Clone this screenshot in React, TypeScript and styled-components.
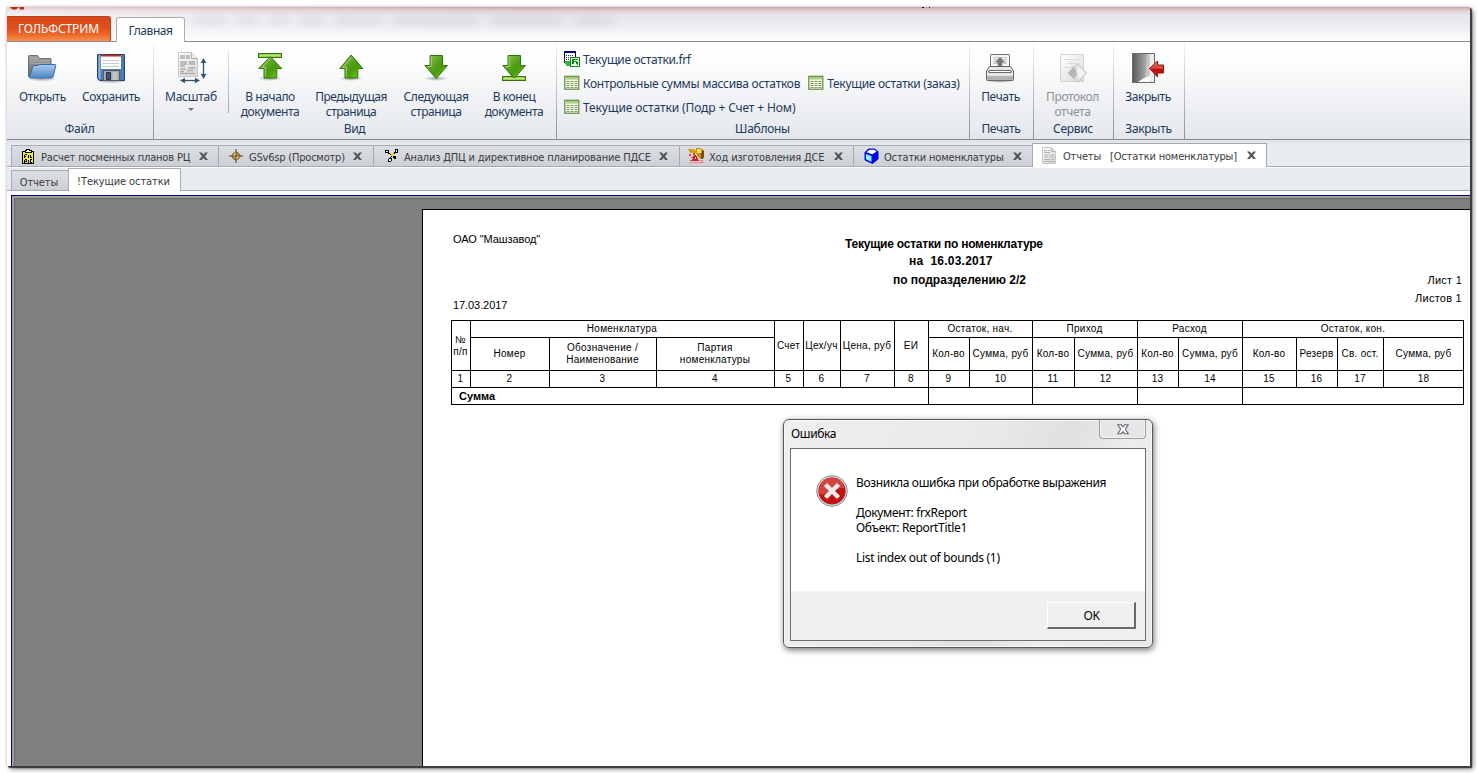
import React from 'react';
import styled, { createGlobalStyle, css } from 'styled-components';

const UI = '"Noto Sans", "Open Sans", sans-serif';
const TAHOMA = '"DejaVu Sans Condensed", "DejaVu Sans", sans-serif';
const ARIAL = '"Liberation Sans", Arial, sans-serif';

const GlobalStyle = createGlobalStyle`
  *, *::before, *::after { box-sizing: border-box; }
  html, body { margin: 0; background: #fff; }
  body { overflow: hidden; font: 12px/15px ${UI}; color: #1e395b; }
  svg { display: block; flex: none; }
`;

/* ---------- shell ---------- */

const Screen = styled.div`
  width: 1477px;
  height: 773px;
  padding: 7px;
  overflow: hidden;
`;

const Window = styled.div`
  width: 1463px;
  height: 759px;
  display: flex;
  flex-direction: column;
  background: #fff;
  box-shadow: 1px 1px 0 #3c3c3c, 2px 2px 1px rgba(0, 0, 0, 0.6), 3px 3px 5px rgba(0, 0, 0, 0.5), 0 0 3px rgba(0, 0, 0, 0.22);
`;

const TitleBar = styled.header`
  position: relative;
  height: 35px;
  flex: none;
  display: flex;
  align-items: flex-end;
  background: linear-gradient(90deg, rgba(255,255,255,.45), rgba(255,255,255,0) 35%),
    linear-gradient(#c99c9e 0, #dac0c2 2px, #e3d8db 5px, #e6e7eb 9px, #eaecf0 18px, #f6f7f9 28px, #fdfdfe 34px);
  border-bottom: 1px solid #868b91;
`;

const AppButton = styled.button`
  width: 104px;
  height: 25px;
  padding: 0 0 1px;
  border: 1px solid #b9421b;
  border-left: 0;
  border-bottom: 0;
  border-radius: 0 3px 0 0;
  background: linear-gradient(#d8481a 0, #dd4f1c 45%, #ec6a2c 75%, #f98f4e 100%);
  color: #fff;
  font: 12px/15px ${UI};
  letter-spacing: -0.1px;
`;

const RibbonTab = styled.div`
  width: 69px;
  height: 25px;
  margin: 0 0 -1px 5px;
  padding-top: 5px;
  text-align: center;
  background: #fff;
  border: 1px solid #a9aeb5;
  border-bottom: 0;
  border-radius: 3px 3px 0 0;
  letter-spacing: -0.45px;
  position: relative;
`;

const GlassMenu = styled.div`
  position: absolute;
  left: 188px;
  top: 9px;
  display: flex;
  gap: 12px;
  filter: blur(4px);
`;

const Smear = styled.i<{ $w: number }>`
  width: ${(p) => p.$w}px;
  height: 9px;
  background: rgba(110, 112, 125, 0.11);
`;

const Fragment = styled.div<{ $x: number }>`
  position: absolute;
  left: ${(p) => p.$x}px;
  top: 0;
`;

/* ---------- ribbon ---------- */

const Ribbon = styled.div`
  height: 98px;
  flex: none;
  display: flex;
  background: linear-gradient(#fff, #fbfcfd 25%, #eef0f3 65%, #e4e8ed);
  border-bottom: 1px solid #868b91;
`;

const Group = styled.section<{ $w: number }>`
  width: ${(p) => p.$w}px;
  display: flex;
  flex-direction: column;
  border-right: 1px solid;
  border-image: linear-gradient(#f4f5f6, #8b9097) 1;
`;

const GroupBody = styled.div`
  height: 79px;
  display: flex;
`;

const GroupLabel = styled.div`
  padding-right: 1px;
  text-align: center;
  letter-spacing: -0.3px;
`;

const BigButton = styled.div<{ $w: number; $disabled?: boolean; $ls?: number }>`
  width: ${(p) => p.$w}px;
  padding-top: 10px;
  display: flex;
  flex-direction: column;
  align-items: center;
  text-align: center;
  white-space: pre;
  letter-spacing: ${(p) => p.$ls ?? -0.4}px;
  color: ${(p) => (p.$disabled ? '#8d9197' : '#1e395b')};
  svg { margin-bottom: 5px; }
`;

const InnerRule = styled.div`
  width: 1px;
  height: 61px;
  margin-top: 10px;
  background: linear-gradient(#dfe3ea, #9fa9bd);
`;

const DropArrow = styled.i`
  margin-top: 4px;
  border: 3px solid transparent;
  border-top-color: #6c7178;
  border-bottom: 0;
`;

const Templates = styled.div`
  height: 79px;
  padding: 5px 0 0 7px;
  display: flex;
  flex-direction: column;
`;

const TemplateRow = styled.div`
  height: 24px;
  display: flex;
  gap: 8px;
`;

const Template = styled.div<{ $ls: number }>`
  display: flex;
  align-items: center;
  gap: 3px;
  white-space: nowrap;
  letter-spacing: ${(p) => p.$ls}px;
`;

/* ---------- tab strips ---------- */

const WorkTabs = styled.nav`
  height: 27px;
  flex: none;
  display: flex;
  align-items: flex-end;
  padding: 0 0 0 4px;
  background: linear-gradient(#dfe3e8, #e8ebf0 5px);
  border-bottom: 1px solid #a5abb5;
  font-family: ${TAHOMA};
  font-size: 11px;
  color: #3b3b3b;
`;

const WorkTab = styled.div<{ $w: number; $pad: number; $active?: boolean }>`
  width: ${(p) => p.$w}px;
  height: 21px;
  padding-left: ${(p) => p.$pad}px;
  display: flex;
  align-items: center;
  border: 1px solid #a5abb5;
  border-bottom: 0;
  border-right-width: 0;
  background: linear-gradient(#dcdfe4, #ccd0d6);
  ${(p) =>
    p.$active &&
    css`
      height: 24px;
      margin-bottom: -1px;
      padding-bottom: 1px;
      border-right-width: 1px;
      background: #fff;
    `}
`;

const WorkLabel = styled.span<{ $gap: number; $w: number; $ls?: number }>`
  width: ${(p) => p.$w}px;
  margin-left: ${(p) => p.$gap}px;
  padding-top: 2px;
  white-space: pre;
  letter-spacing: ${(p) => p.$ls ?? -0.17}px;
`;

const DocTabs = styled.nav`
  height: 24px;
  flex: none;
  display: flex;
  align-items: flex-end;
  padding-left: 4px;
  background: #e8ebf0;
  border-top: 1px solid #fff;
  border-bottom: 1px solid #a5abb5;
  font-family: ${TAHOMA};
  font-size: 11px;
  color: #3b3b3b;
`;

const DocTab = styled.div<{ $w: number; $active?: boolean }>`
  width: ${(p) => p.$w}px;
  height: 20px;
  padding: 4px 2px 0 0;
  text-align: center;
  letter-spacing: -0.1px;
  border: 1px solid #a5abb5;
  border-bottom: 0;
  border-right: 0;
  background: linear-gradient(#dcdfe4, #ccd0d6);
  ${(p) =>
    p.$active &&
    css`
      height: 23px;
      padding-top: 5px;
      margin-bottom: -1px;
      border-right: 1px solid #a5abb5;
      background: #fff;
    `}
`;

/* ---------- report ---------- */

const Viewer = styled.main`
  flex: 1;
  min-height: 0;
  margin: 4px 0 0 4px;
  border: 1px solid #000080;
  border-right: 0;
  border-bottom: 0;
  display: flex;
`;

const ViewerInner = styled.div`
  flex: 1;
  border: solid #a0a0a0;
  border-width: 2px 0 0 2px;
  display: flex;
`;

const Canvas = styled.div`
  flex: 1;
  border: solid #696969;
  border-width: 1px 0 0 1px;
  background: #808080;
  padding: 10px 0 0 407px;
  display: flex;
`;

const Page = styled.article`
  flex: 1;
  border: solid #000;
  border-width: 1px 0 0 1px;
  background: #fff;
  padding: 21px 0 0 28px;
  font-family: ${ARIAL};
  color: #000;
`;

const ReportHead = styled.div`
  width: 1013px;
  height: 89px;
  display: flex;
  justify-content: space-between;
  font-size: 11px;
`;

const HeadLeft = styled.div`
  width: 200px;
  padding: 1px 0 7px 2px;
  display: flex;
  flex-direction: column;
  justify-content: space-between;
  letter-spacing: -0.08px;
`;

const HeadCenter = styled.div`
  width: 420px;
  padding: 6px 0 0 0;
  font-weight: bold;
  font-size: 12px;
  white-space: pre;
`;

const TitleLine = styled.div<{ $indent: number; $h: number; $ls: number }>`
  height: ${(p) => p.$h}px;
  padding-left: ${(p) => p.$indent}px;
  letter-spacing: ${(p) => p.$ls}px;
`;

const HeadRight = styled.div`
  width: 199px;
  padding: 40px 2px 0 0;
  text-align: right;
  line-height: 18px;
  letter-spacing: 0.25px;
`;

const Table = styled.div`
  width: 1013px;
  display: grid;
  grid-template-columns: 19px 79px 107px 118px 29px 37px 54px 34px 41px 63px 42px 63px 41px 64px 54px 41px 46px 81px;
  grid-template-rows: 17px 33px 17px 18px;
  border-right: 1px solid #000;
  font-size: 10px;
  line-height: 12px;
`;

const Cell = styled.div<{ $col: number; $row: number; $cols?: number; $rows?: number; $total?: boolean }>`
  grid-column: ${(p) => p.$col} / span ${(p) => p.$cols ?? 1};
  grid-row: ${(p) => p.$row} / span ${(p) => p.$rows ?? 1};
  padding-right: 1px;
  display: flex;
  align-items: center;
  justify-content: center;
  text-align: center;
  white-space: pre;
  letter-spacing: 0.27px;
  border: solid #000;
  border-width: 1px 0 0 1px;
  ${(p) =>
    p.$total &&
    css`
      justify-content: flex-start;
      padding-left: 7px;
      border-bottom-width: 1px;
      font-weight: bold;
      font-size: 11px;
      letter-spacing: 0;
    `}
`;

/* ---------- error dialog ---------- */

const Dialog = styled.div`
  position: absolute;
  left: 783px;
  top: 419px;
  width: 370px;
  height: 229px;
  padding: 0 6px 6px;
  display: flex;
  flex-direction: column;
  border: 1px solid #55585c;
  border-radius: 6px;
  background: linear-gradient(115deg, #efefef 0, #e9e9e9 45%, #e0e0e0 62%, #ececec 75%, #e8e8e8);
  box-shadow: inset 0 0 0 1px #f8f8f8, 1px 2px 6px rgba(0, 0, 0, 0.55);
  color: #000;
`;

const DialogTitle = styled.div`
  height: 28px;
  flex: none;
  display: flex;
  justify-content: space-between;
  padding: 0 0 0 1px;
  letter-spacing: -0.35px;
  span { padding-top: 6px; }
`;

const DialogClose = styled.div`
  width: 47px;
  height: 19px;
  display: flex;
  align-items: center;
  justify-content: center;
  border: 1px solid #9b9da1;
  border-top: 0;
  border-radius: 0 0 4px 4px;
  background: #e6e6e7;
  box-shadow: inset 0 0 0 1px #f3f3f3;
`;

const DialogClient = styled.div`
  flex: 1;
  display: flex;
  flex-direction: column;
  border: 1px solid #6b6e72;
  background: #fff;
`;

const Message = styled.div`
  height: 142px;
  padding: 26px 0 0 25px;
  display: flex;
  gap: 8px;
`;

const MessageText = styled.div`
  white-space: pre;
  letter-spacing: -0.33px;
`;

const DialogFooter = styled.div`
  flex: 1;
  padding: 11px 9px 0 0;
  display: flex;
  justify-content: flex-end;
  background: #f0f0f0;
`;

const OkButton = styled.button`
  width: 89px;
  height: 27px;
  padding: 0 0 0 1px;
  border: solid;
  border-width: 1px 2px 2px 1px;
  border-color: #fff #696969 #696969 #fff;
  background: #f0f0f0;
  font: 12px/15px ${UI};
  letter-spacing: -0.3px;
  color: #000;
`;

/* ---------- icons ---------- */

const Defs = () => (
  <svg width="0" height="0" aria-hidden>
    <defs>
      <linearGradient id="gr" x1="0" y1="0" x2="1" y2="1">
        <stop offset="0" stopColor="#9bc868" /><stop offset=".45" stopColor="#56a01b" /><stop offset=".6" stopColor="#4a9a0a" /><stop offset="1" stopColor="#74d81a" />
      </linearGradient>
      <linearGradient id="bl" x1="0" y1="0" x2="0" y2="1">
        <stop offset="0" stopColor="#a9cbef" /><stop offset="1" stopColor="#4f86c6" />
      </linearGradient>
      <linearGradient id="gy" x1="0" y1="0" x2="0" y2="1">
        <stop offset="0" stopColor="#a2a2a2" /><stop offset="1" stopColor="#666" />
      </linearGradient>
      <linearGradient id="pap" x1="0" y1="0" x2="1" y2="1">
        <stop offset="0" stopColor="#fff" /><stop offset="1" stopColor="#d5d5d5" />
      </linearGradient>
      <linearGradient id="door" x1="0" y1="0" x2="1" y2="0">
        <stop offset="0" stopColor="#5c5c5c" /><stop offset="1" stopColor="#b9b9b9" />
      </linearGradient>
      <linearGradient id="rd" x1="0" y1="0" x2="0" y2="1">
        <stop offset="0" stopColor="#e2807c" /><stop offset=".48" stopColor="#cf3a36" /><stop offset=".52" stopColor="#b80f0f" /><stop offset="1" stopColor="#d81a14" />
      </linearGradient>
      <radialGradient id="sh"><stop offset="0" stopColor="#000" stopOpacity=".35" /><stop offset="1" stopColor="#000" stopOpacity="0" /></radialGradient>
    </defs>
  </svg>
);

const OpenIcon = () => (
  <svg width="32" height="32" viewBox="1 0 32 32">
    <ellipse cx="16" cy="27" rx="15" ry="2.5" fill="url(#sh)" />
    <path d="M2.500 25V4.500q0-1 1-1h8l2 3h10.500q1 0 1 1V16H8z" fill="url(#gy)" stroke="#6e6e6e" />
    <path d="M4 6.500h8M4 9h20M4 11.500h20" stroke="#b5b5b5" strokeWidth=".7" />
    <path d="M6.500 15q.3-1.500 1.500-1.500h4l1.500-1h15.500q1 0 .8 1L27 25q-.3 1-1.500 1H4.500q-1.500 0-1-1.500 2-4 3-9.500z" fill="url(#bl)" stroke="#3c6ba5" />
  </svg>
);

const SaveIcon = () => (
  <svg width="32" height="32" viewBox="0 0 32 32">
    <ellipse cx="16" cy="29" rx="16" ry="2.500" fill="url(#sh)" />
    <path d="M2.500 2.500h27v26h-25l-2-2z" fill="#4c79b7" stroke="#26436f" />
    <path d="M3.500 3.500h2v23h-2z" fill="#8fb3de" />
    <path d="M6 3h20v14H6z" fill="#fbfbfb" /><path d="M6 3h20v1.500H6z" fill="#cf2414" />
    <path d="M8 8.500h16M8 11.500h16M8 14.500h16" stroke="#c9ccd1" />
    <path d="M8.500 18.500h16v10h-16z" fill="#a7a9ad" stroke="#595b60" />
    <path d="M11.500 20.500h4v7h-4z" fill="#35538a" stroke="#333" />
    <path d="M17.500 20h5v8h-5z" fill="#c4c4c4" />
  </svg>
);

const ScaleIcon = () => (
  <svg width="32" height="32" viewBox="0 0 32 32">
    <path d="M3.500.500h13l6 6v18h-19z" fill="url(#pap)" stroke="#c6c6c6" />
    <path d="M16.500.500v6h6" fill="#eee" stroke="#b0b0b0" />
    <path d="M5 4h5m1 0h4M5 6h5m1 0h4M5 10h7m1.500 0H20M5 12h7m1.500 0H20M5 14h5M5 17h6m2-1h7M5 19.500h4m3-1h6M5 21.500h15" stroke="#acacac" strokeWidth="1.300" />
    <path d="M28.500 10v13" stroke="#33536f" strokeWidth="1.300" /><path d="M28.500 6l2.800 5h-5.600zM28.500 27l2.800-5h-5.600z" fill="#33536f" />
    <path d="M8 28.500h13" stroke="#33536f" strokeWidth="1.300" /><path d="M5 28.500l5-2.800v5.600zM25 28.500l-5-2.800v5.600z" fill="#33536f" />
  </svg>
);

const ArrowIcon = ({ down, bar }: { down?: boolean; bar?: boolean }) => (
  <svg width="32" height="32" viewBox="0 0 32 32">
    <ellipse cx="16" cy="26.500" rx="12" ry="2.500" fill="url(#sh)" />
    {bar && <rect x="4.500" y={down ? 24.500 : 1.500} width="23" height="4" fill="#9ad057" stroke="#33750b" />}
    <path
      d={down ? 'M10 3.500h12.500v10h5L16.200 26.500 4.800 13.500H10z' : bar ? 'M16.200 4.500 27.800 16.500h-5v9.500H10v-9.500H4.800z' : 'M16.200 3 27.800 16.500h-5v9.500H10v-9.500H4.800z'}
      fill="url(#gr)" stroke="#33750b" strokeLinejoin="round"
    />
    <path
      d={down ? 'M11.200 5v9.500H7.500' : 'M16.200 6 7.800 15.500h3.500V25'}
      fill="none" stroke="#c0e394" strokeOpacity=".7"
    />
    {bar && <path d={down ? 'M6 26.500h20' : 'M6 3.500h20'} stroke="#b7e67c" />}
  </svg>
);

const PrintIcon = () => (
  <svg width="32" height="32" viewBox="1 0 32 32">
    <ellipse cx="16" cy="29" rx="15" ry="2" fill="url(#sh)" />
    <path d="M6.500 14V3q0-.5.500-.5h18q.5 0 .5.500v11" fill="#f6f6f6" stroke="#707070" />
    <path d="M9 5.500h14M9 7.500h14M9 9.500h14M9 11.500h5m5 0h4" stroke="#c4c4c4" />
    <path d="M16 5l5 5.500h-2.800V14h-4.400v-3.500H11z" fill="#777" />
    <path d="M5.500 14.500h21l3 4.500v8.500q0 1-1 1h-25q-1 0-1-1V19z" fill="#e7e7e7" stroke="#6a6a6a" />
    <path d="M5 18.500h22v2H5z" fill="#fff" stroke="#5b5b5b" strokeWidth=".9" />
    <path d="M3 24h26v4H3z" fill="#9b9b9b" opacity=".7" />
  </svg>
);

const ProtocolIcon = () => (
  <svg width="32" height="32" viewBox="1 0 32 32">
    <path d="M4.500 2.500h23v27h-23z" fill="url(#pap)" stroke="#cdcdcd" opacity=".85" />
    <path d="M8 7.500h16M11 11.500h10M8 15.500h10" stroke="#dadada" />
    <path d="M21.500 11.500 31 21 21.500 30 12 21z" fill="#dedede" stroke="#c8c8c8" />
    <path d="M12 21l6-7 3 8-3 5z" fill="#b7b7b7" /><path d="M22 14l7 7-6 6-2-7z" fill="#f3f3f3" />
  </svg>
);

const ExitIcon = () => (
  <svg width="34" height="32" viewBox="1 0 34 32">
    <path d="M2.500 1.500h22v29h-22z" fill="#ececec" stroke="#6a6a6a" />
    <path d="M3 2h16v24L8 30H3z" fill="url(#door)" /><path d="M17 2.500l3 .5v20l-5 4z" fill="#c9c9c9" opacity=".8" />
    <path d="M14 26l6-2v6H8z" fill="#fafafa" />
    <path d="M19.500 16.500 27.500 9v4h6v8h-6v4z" fill="url(#rd)" stroke="#96100e" strokeLinejoin="round" />
  </svg>
);

const GridIcon = () => (
  <svg width="16" height="16" viewBox="0 0 16 16">
    <rect x=".8" y="1.300" width="14" height="12.900" fill="#f4fae9" stroke="#64893b" strokeWidth="1.200" />
    <rect x="1.400" y="2" width="12.800" height="2.500" fill="#a9cc86" />
    <path d="M2.500 6.500h3m1 0h3m1 0h3M2.500 8.500h3m1 0h3m1 0h3M2.500 10.500h3m1 0h3m1 0h3M2.500 12.500h3m1 0h3m1 0h3" stroke="#7f9a5c" strokeWidth="1" />
  </svg>
);

const FrfIcon = () => (
  <svg width="16" height="16" viewBox="0 0 16 16" shapeRendering="crispEdges">
    <path d="M.5.500h11v11H.5z" fill="#fff" stroke="#111" /><path d="M0 0h12v2H0z" fill="#000080" />
    <path d="M2 4.500h1m1 0h1m1 0h1m1 0h1M2 6.500h1m1 0h1m1 0h1m1 0h1M2 8.500h1m1 0h1m1 0h1" stroke="#222" strokeWidth="1" />
    <path d="M1 10h6v5H2z" fill="#3cb543" />
    <path d="M6.500 6.500h9v9h-9z" fill="#eaffea" stroke="#0a8a12" /><path d="M9 13V8.500h5M9 10.500h3l2 3" stroke="#0a8a12" fill="none" strokeWidth="1.500" />
  </svg>
);

const CloseX = () => (
  <svg width="9" height="9" viewBox="0 0 9 9">
    <path d="M0 .5h2.700l1.800 2 1.800-2H9L6 4.300 9 8H6.300L4.500 6 2.700 8H0l3-3.700z" fill="#55585d" />
  </svg>
);

const ClipboardIcon = () => (
  <svg width="12" height="15" viewBox="0 0 12 15" shapeRendering="crispEdges">
    <path d="M.5 2.500h11v12H.5z" fill="#f3ee2b" stroke="#000" />
    <path d="M3 3h6V1.500H7.500V.5h-3v1H3z" fill="#fff" stroke="#000" />
    <path d="M2.500 5.500V9M2.500 5.500H5M3 7.500h1M6.500 5.500V9M8.500 5.500v3H10M2.500 10.500V14M2.500 10.500h2v1.500H3M6.500 10.500V14M10 10.500H8.500V13H10" stroke="#000" fill="none" />
  </svg>
);

const StarIcon = () => (
  <svg width="14" height="14" viewBox="0 0 14 14">
    <path d="M7 0l1.300 5.700L14 7 8.300 8.300 7 14 5.700 8.300 0 7l5.700-1.300z" fill="#8f6530" stroke="#6d4f28" strokeWidth=".5" />
    <circle cx="7" cy="7" r="3.700" fill="#b58a4e" stroke="#8a6433" />
    <path d="M7 2v5H3.500zM7 7h4L7 11z" fill="#e0c48e" /><path d="M7 3v8M3 7h8" stroke="#5f4320" strokeWidth=".7" />
  </svg>
);

const MoleculeIcon = () => (
  <svg width="14" height="14" viewBox="0 0 14 14" shapeRendering="crispEdges">
    <path d="M3 4l4 2 4-3M7 6l3 3M7 6l-2 4" stroke="#000" strokeWidth="1.200" fill="none" />
    <circle cx="2" cy="2.500" r="1.600" fill="#fff" stroke="#000" /><circle cx="11.500" cy="2" r="1.600" fill="#fff" stroke="#000" />
    <circle cx="5" cy="11" r="1.500" fill="#fff" stroke="#000" /><circle cx="10" cy="8.500" r="1" fill="#fff" stroke="#000" /><path d="M6 4h3v3H6z" fill="#f0d21c" />
  </svg>
);

const HammerIcon = () => (
  <svg width="17" height="16" viewBox="0 0 17 16" shapeRendering="crispEdges">
    <path d="M1 6h2v2H1zM3 9h2v1H3zM5 5h2v2H5zM2 12h3v1H2z" fill="#e03a3a" />
    <path d="M4 13l2-6h2l3 6z" fill="#d02020" /><path d="M7 9h1v2H7z" fill="#fff" />
    <path d="M0 1h5l5 2v3L5 4.500H2z" fill="#d8a010" /><path d="M8 0h4l4 2v8l-4 1-3-3z" fill="#c98f0c" /><path d="M9 1h4v4H9z" fill="#f6df7a" /><path d="M14 3h2v7l-3 1v-3z" fill="#7a4e05" />
    <path d="M12 12h2v1h-2zM1 14.500h15" stroke="#ff8d8d" fill="#ff6666" />
  </svg>
);

const CubeIcon = () => (
  <svg width="15" height="16" viewBox="0 0 15 16">
    <path d="M4.500 1h6L14 3.500v7.500l-5.500 4.500L1 12V4.500z" fill="#0000f0" stroke="#0000f0" strokeWidth="1" strokeLinejoin="round" />
    <path d="M2.500 4.300l3-2.600h4.800l2.400 1.800L8.300 6.300z" fill="#fff" /><path d="M1.900 5.900l5.600 2v6L1.900 11.300z" fill="#7ff4ff" />
  </svg>
);

const SheetIcon = () => (
  <svg width="14" height="17" viewBox="0 0 14 17">
    <path d="M.5.500h9l4 4v12H.5z" fill="url(#pap)" stroke="#c4c4c4" /><path d="M9.500.500v4h4" fill="#ddd" stroke="#b9b9b9" />
    <path d="M2 3.500h3m1 0h2M2 5.500h6M2 8h5m1 0h4M2 10h4m1 0h5M2 12.500h6m1 0h3M2 14.500h10" stroke="#b0b0b0" />
  </svg>
);

const ErrorIcon = () => (
  <svg width="32" height="32" viewBox="0 0 32 32">
    <circle cx="16" cy="16" r="15.300" fill="#d9d9d9" stroke="#8b8d90" />
    <circle cx="16" cy="16" r="13.600" fill="#c01413" />
    <path d="M2.800 18.500A13.400 13.400 0 0 1 29 13Q20 13 14 17t-11.200 1.500z" fill="#dd625e" opacity=".6" />
    <path d="M9.500 9.500l13 13M22.500 9.500l-13 13" stroke="#ececec" strokeWidth="4.400" />
  </svg>
);

const DialogX = () => (
  <svg width="12" height="11" viewBox="0 0 12 11">
    <path d="M.7.700h3.500L6 3 7.800.7h3.500L8.300 5.300l3 4.500H7.800L6 7.500 4.200 9.800H.7l3-4.500z" fill="#fff" stroke="#5e6473" strokeWidth="1.100" strokeLinejoin="round" />
  </svg>
);

/* ---------- data ---------- */

const workTabs = [
  { w: 207, pad: 10, icon: <ClipboardIcon />, gap: 7, text: 'Расчет посменных планов РЦ', tw: 158 },
  { w: 155, pad: 10, icon: <StarIcon />, gap: 6, text: 'GSv6sp (Просмотр)', tw: 104, ls: -0.2 },
  { w: 306, pad: 11, icon: <MoleculeIcon />, gap: 5, text: 'Анализ ДПЦ и директивное планирование ПДСЕ', tw: 255 },
  { w: 174, pad: 8, icon: <HammerIcon />, gap: 4, text: 'Ход изготовления ДСЕ', tw: 125 },
  { w: 179, pad: 10, icon: <CubeIcon />, gap: 5, text: 'Остатки номенклатуры', tw: 129 },
];

const cells: [string, number, number, number, number][] = [
  ['№\nп/п', 1, 1, 1, 2], ['Номенклатура', 2, 1, 3, 1], ['Счет', 5, 1, 1, 2], ['Цех/уч', 6, 1, 1, 2], ['Цена, руб', 7, 1, 1, 2], ['ЕИ', 8, 1, 1, 2],
  ['Остаток, нач.', 9, 1, 2, 1], ['Приход', 11, 1, 2, 1], ['Расход', 13, 1, 2, 1], ['Остаток, кон.', 15, 1, 4, 1],
  ['Номер', 2, 2, 1, 1], ['Обозначение /\nНаименование', 3, 2, 1, 1], ['Партия\nноменклатуры', 4, 2, 1, 1],
  ['Кол-во', 9, 2, 1, 1], ['Сумма, руб', 10, 2, 1, 1], ['Кол-во', 11, 2, 1, 1], ['Сумма, руб', 12, 2, 1, 1], ['Кол-во', 13, 2, 1, 1], ['Сумма, руб', 14, 2, 1, 1],
  ['Кол-во', 15, 2, 1, 1], ['Резерв', 16, 2, 1, 1], ['Св. ост.', 17, 2, 1, 1], ['Сумма, руб', 18, 2, 1, 1],
];

const totals: [string, number, number][] = [['Сумма', 1, 8], ['', 9, 2], ['', 11, 2], ['', 13, 2], ['', 15, 4]];

export default function App() {
  return (
    <Screen>
      <GlobalStyle />
      <Window>
        <TitleBar>
          <Fragment $x={3}>
            <svg width="14" height="4" viewBox="0 0 14 4"><path d="M0 0q1 3 6 2.500L9 0M9.500 0H14v2.500H9.500z" fill="#c5281f" /></svg>
          </Fragment>
          <Fragment $x={915}>
            <svg width="10" height="1" viewBox="0 0 10 1"><path d="M0 0h2v1H0zM7 0h1v1H7z" fill="#111" /></svg>
          </Fragment>
          <GlassMenu>
            <Smear $w={30} /><Smear $w={20} /><Smear $w={20} /><Smear $w={22} /><Smear $w={46} /><Smear $w={84} /><Smear $w={74} /><Smear $w={38} />
          </GlassMenu>
          <AppButton>ГОЛЬФСТРИМ</AppButton>
          <RibbonTab>Главная</RibbonTab>
        </TitleBar>

        <Ribbon>
          <Group $w={147}>
            <GroupBody>
              <BigButton $w={71}><OpenIcon />Открыть</BigButton>
              <BigButton $w={66}><SaveIcon />Сохранить</BigButton>
            </GroupBody>
            <GroupLabel>Файл</GroupLabel>
          </Group>
          <Group $w={403}>
            <GroupBody>
              <BigButton $w={74} $ls={-0.25}><ScaleIcon />Масштаб<DropArrow /></BigButton>
              <InnerRule />
              <BigButton $w={82}><ArrowIcon bar />{'В начало\nдокумента'}</BigButton>
              <BigButton $w={80} $ls={-0.5}><ArrowIcon />{'Предыдущая\nстраница'}</BigButton>
              <BigButton $w={90}><ArrowIcon down />{'Следующая\nстраница'}</BigButton>
              <BigButton $w={66}><ArrowIcon down bar />{'В конец\nдокумента'}</BigButton>
            </GroupBody>
            <GroupLabel>Вид</GroupLabel>
          </Group>
          <Group $w={413}>
            <Templates>
              <TemplateRow><Template $ls={-0.35}><FrfIcon />Текущие остатки.frf</Template></TemplateRow>
              <TemplateRow>
                <Template $ls={-0.28}><GridIcon />Контрольные суммы массива остатков</Template>
                <Template $ls={-0.3}><GridIcon />Текущие остатки (заказ)</Template>
              </TemplateRow>
              <TemplateRow><Template $ls={-0.12}><GridIcon />Текущие остатки (Подр + Счет + Ном)</Template></TemplateRow>
            </Templates>
            <GroupLabel>Шаблоны</GroupLabel>
          </Group>
          <Group $w={64}>
            <GroupBody><BigButton $w={61}><PrintIcon />Печать</BigButton></GroupBody>
            <GroupLabel>Печать</GroupLabel>
          </Group>
          <Group $w={80}>
            <GroupBody><BigButton $w={77} $disabled><ProtocolIcon />{'Протокол\nотчета'}</BigButton></GroupBody>
            <GroupLabel>Сервис</GroupLabel>
          </Group>
          <Group $w={71}>
            <GroupBody><BigButton $w={68}><ExitIcon />Закрыть</BigButton></GroupBody>
            <GroupLabel>Закрыть</GroupLabel>
          </Group>
        </Ribbon>

        <WorkTabs>
          {workTabs.map((t) => (
            <WorkTab key={t.text} $w={t.w} $pad={t.pad}>
              {t.icon}
              <WorkLabel $gap={t.gap} $w={t.tw} $ls={t.ls}>{t.text}</WorkLabel>
              <CloseX />
            </WorkTab>
          ))}
          <WorkTab $w={235} $pad={9} $active>
            <SheetIcon />
            <WorkLabel $gap={7} $w={184} $ls={-0.17}>{'Отчеты   [Остатки номенклатуры]'}</WorkLabel>
            <CloseX />
          </WorkTab>
        </WorkTabs>

        <DocTabs>
          <DocTab $w={57}>Отчеты</DocTab>
          <DocTab $w={113} $active>!Текущие остатки</DocTab>
        </DocTabs>

        <Viewer>
          <ViewerInner>
            <Canvas>
              <Page>
                <ReportHead>
                  <HeadLeft>
                    <div>ОАО "Машзавод"</div>
                    <div>17.03.2017</div>
                  </HeadLeft>
                  <HeadCenter>
                    <TitleLine $indent={97} $h={17} $ls={-0.23}>Текущие остатки по номенклатуре</TitleLine>
                    <TitleLine $indent={161} $h={19} $ls={0.22}>{'на  16.03.2017'}</TitleLine>
                    <TitleLine $indent={145} $h={17} $ls={-0.02}>по подразделению 2/2</TitleLine>
                  </HeadCenter>
                  <HeadRight>
                    <div>Лист 1</div>
                    <div>Листов 1</div>
                  </HeadRight>
                </ReportHead>
                <Table>
                  {cells.map(([text, col, row, cols, rows]) => (
                    <Cell key={`${row}-${col}`} $col={col} $row={row} $cols={cols} $rows={rows}>{text}</Cell>
                  ))}
                  {Array.from({ length: 18 }, (_, i) => (
                    <Cell key={`n${i}`} $col={i + 1} $row={3}>{i + 1}</Cell>
                  ))}
                  {totals.map(([text, col, cols]) => (
                    <Cell key={`t${col}`} $col={col} $row={4} $cols={cols} $total>{text}</Cell>
                  ))}
                </Table>
              </Page>
            </Canvas>
          </ViewerInner>
        </Viewer>
      </Window>

      <Dialog role="alertdialog">
        <DialogTitle>
          <span>Ошибка</span>
          <DialogClose><DialogX /></DialogClose>
        </DialogTitle>
        <DialogClient>
          <Message>
            <ErrorIcon />
            <MessageText>{'Возникла ошибка при обработке выражения\n\nДокумент: frxReport\nОбъект: ReportTitle1\n\nList index out of bounds (1)'}</MessageText>
          </Message>
          <DialogFooter><OkButton>OK</OkButton></DialogFooter>
        </DialogClient>
      </Dialog>
      <Defs />
    </Screen>
  );
}
